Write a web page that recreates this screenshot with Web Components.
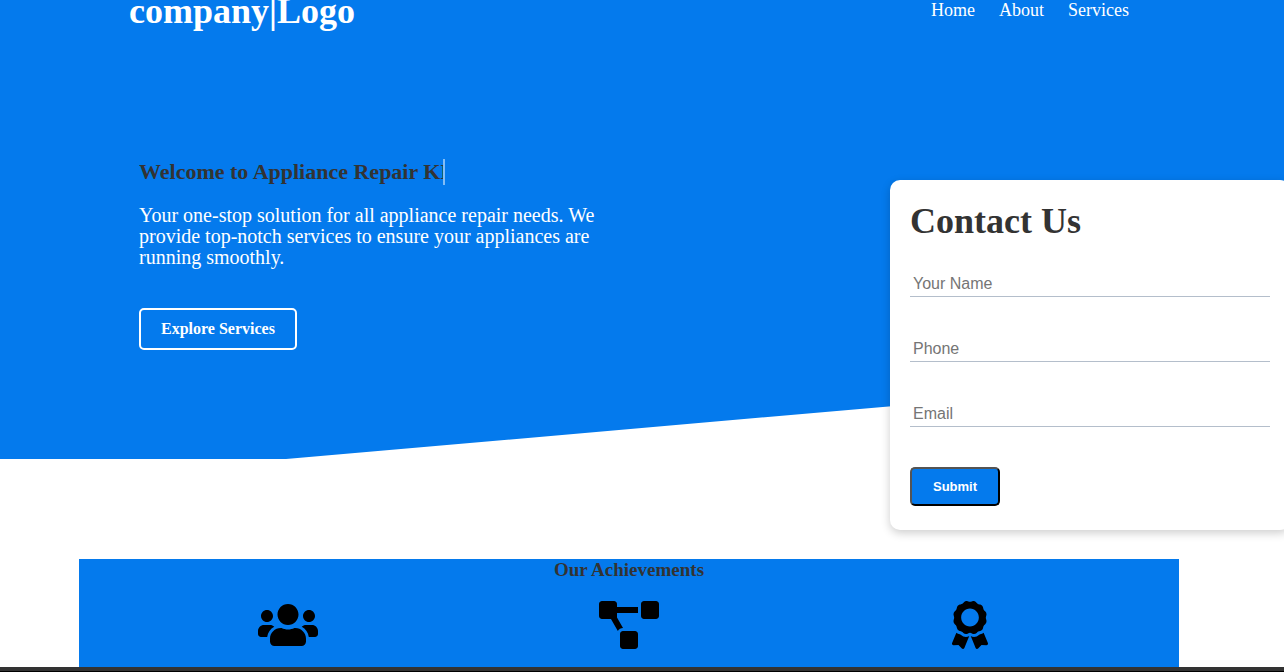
<!DOCTYPE html>
<html lang="en">
<head>
<meta charset="utf-8">
<meta name="viewport" content="width=device-width, initial-scale=1">
<title>Appliance Repair</title>
<style>
  :root { --primary: #047aed; --dark: #333; --serif: "Liberation Serif", "Times New Roman", serif; --sans: "Liberation Sans", Arial, sans-serif; }
  body { margin: 0; background: #fff; color: var(--dark); font-family: var(--serif); }
</style>
</head>
<body>
<repair-page></repair-page>
<script>
const define = (name, html) => {
  const template = document.createElement('template');
  template.innerHTML = html;
  customElements.define(name, class extends HTMLElement {
    constructor() {
      super();
      this.attachShadow({ mode: 'open' }).append(template.content.cloneNode(true));
    }
  });
};

/* Centred column shared by every section */
define('page-container', `
  <style>
    :host { display: block; padding-right: 26px; }
    div { max-width: 1100px; margin: 0 auto; }
  </style>
  <div><slot></slot></div>`);

define('site-nav', `
  <style>
    :host { display: block; position: relative; z-index: 2; background: var(--primary); color: #fff; }
    .bar { display: flex; align-items: center; justify-content: space-between; height: 21px; padding: 0 50px; }
    h1 { margin: 0; font-size: 36px; line-height: 42px; }
    nav { display: flex; gap: 24px; font-size: 18px; line-height: 21px; }
    a { color: #fff; text-decoration: none; }
  </style>
  <page-container><div class="bar">
    <h1>company|Logo</h1>
    <nav><a href="#home">Home</a><a href="#about">About</a><a href="#services">Services</a></nav>
  </div></page-container>`);

define('typed-title', `
  <style>
    :host { display: block; }
    h2 { width: 304px; margin: 0; overflow: hidden; white-space: nowrap; border-right: 2px solid rgba(255,255,255,.5); font-size: 22px; line-height: 26px; }
  </style>
  <h2><slot></slot></h2>`);

define('contact-form', `
  <style>
    :host { display: block; box-sizing: border-box; padding: 20px 20px 24px; background: #fff; border-radius: 10px; box-shadow: 0 3px 10px rgba(0,0,0,.2); }
    h2 { margin: 0 0 30px; font-size: 36px; line-height: 42px; }
    input { display: block; box-sizing: border-box; width: 100%; height: 25px; margin: 0 0 40px; padding: 3px; border: 0; border-bottom: 1px solid #b4becb; outline: 0; background: none; font: 16px/18px var(--sans); }
    input::placeholder { color: #757575; }
    button { display: block; padding: 10px 21px; border: 2px outset #000; border-radius: 5px; background: var(--primary); color: #fff; font: bold 13px/15px var(--sans); }
  </style>
  <h2>Contact Us</h2>
  <form>
    <input type="text" placeholder="Your Name" aria-label="Your Name">
    <input type="tel" placeholder="Phone" aria-label="Phone">
    <input type="email" placeholder="Email" aria-label="Email">
    <button type="button">Submit</button>
  </form>`);

define('hero-section', `
  <style>
    :host { display: block; position: relative; z-index: 1; }
    /* Blue backdrop whose lower edge rises to the right at five degrees */
    .backdrop { position: absolute; inset: 0; background: var(--primary);
      clip-path: polygon(0 0, 100% 0, 100% calc(100% - 87px), 286px 100%, 0 100%); }
    .grid { position: relative; display: grid; grid-template-columns: minmax(0, 1fr) 400px; gap: 30px; margin-right: -111px; padding: 138px 0 0 60px; }
    .text { max-width: 475px; }
    p { margin: 20px 0 40px; color: #fff; font-size: 20px; line-height: 21px; }
    a { display: inline-block; padding: 10px 20px; border: 2px solid #fff; border-radius: 5px; color: #fff; font-size: 16px; line-height: 18px; font-weight: bold; text-decoration: none; }
    contact-form { margin: 21px 0 -71px; }
  </style>
  <div class="backdrop"></div>
  <page-container><div class="grid">
    <div class="text">
      <typed-title>Welcome to Appliance Repair KL</typed-title>
      <p>Your one-stop solution for all appliance repair needs. We provide top-notch services to ensure your appliances are running smoothly.</p>
      <a href="#services">Explore Services</a>
    </div>
    <contact-form></contact-form>
  </div></page-container>`);

define('achievement-list', `
  <style>
    :host { display: block; padding-top: 100px; }
    section { background: var(--primary); padding: 0 50px 18px; }
    h3 { margin: 0 0 20px; text-align: center; font-size: 19px; line-height: 22px; }
    .row { display: grid; grid-template-columns: repeat(3, 1fr); gap: 24px; justify-items: center; }
    svg { display: block; height: 48px; fill: #000; }
  </style>
  <page-container><section>
    <h3>Our Achievements</h3>
    <div class="row">
      <svg viewBox="0 0 640 512" width="60" aria-hidden="true"><path d="M96 224c35.3 0 64-28.7 64-64s-28.7-64-64-64-64 28.7-64 64 28.7 64 64 64zm448 0c35.3 0 64-28.7 64-64s-28.7-64-64-64-64 28.7-64 64 28.7 64 64 64zm32 32h-64c-17.6 0-33.5 7.1-45.1 18.6 40.3 22.1 68.9 62 75.1 109.4h66c17.7 0 32-14.3 32-32v-32c0-35.3-28.7-64-64-64zm-256 0c61.9 0 112-50.1 112-112S381.9 32 320 32 208 82.1 208 144s50.1 112 112 112zm76.8 32h-8.3c-20.8 10-43.9 16-68.5 16s-47.6-6-68.5-16h-8.3C179.6 288 128 339.6 128 403.2V432c0 26.5 21.5 48 48 48h288c26.5 0 48-21.5 48-48v-28.8c0-63.6-51.6-115.2-115.2-115.2zm-223.7-13.4C161.5 263.1 145.6 256 128 256H64c-35.3 0-64 28.7-64 64v32c0 17.7 14.3 32 32 32h65.9c6.3-47.4 34.9-87.3 75.2-109.4z"/></svg>
      <svg viewBox="0 0 640 512" width="60" aria-hidden="true"><path d="M384 320H256c-17.67 0-32 14.33-32 32v128c0 17.67 14.33 32 32 32h128c17.67 0 32-14.33 32-32V352c0-17.67-14.33-32-32-32zM192 32c0-17.67-14.33-32-32-32H32C14.33 0 0 14.33 0 32v128c0 17.67 14.33 32 32 32h95.72l73.16 128.04C211.98 300.98 232.4 288 256 288h.28L192 175.51V128h224V64H192V32zM608 0H480c-17.67 0-32 14.33-32 32v128c0 17.67 14.33 32 32 32h128c17.67 0 32-14.33 32-32V32c0-17.67-14.33-32-32-32z"/></svg>
      <svg viewBox="0 0 384 512" width="36" aria-hidden="true"><path d="M97.12 362.63c-8.69-8.69-4.16-6.24-25.12-11.85-9.51-2.55-17.87-7.45-25.43-13.32L1.2 448.7c-4.39 10.77 3.81 22.47 15.43 22.03l52.69-2.01L105.56 507c8 8.44 22.04 5.81 26.43-4.96l52.05-127.62c-10.84 6.04-22.87 9.58-35.31 9.58-19.5 0-37.82-7.59-51.61-21.37zM382.8 448.7l-45.37-111.24c-7.56 5.88-15.92 10.77-25.43 13.32-21.07 5.64-16.45 3.18-25.12 11.85-13.79 13.78-32.12 21.37-51.62 21.37-12.44 0-24.47-3.55-35.31-9.58L252 502.04c4.39 10.77 18.44 13.4 26.43 4.96l36.25-38.28 52.69 2.01c11.62.44 19.82-11.27 15.43-22.03zM263 340c15.28-15.55 17.03-14.21 38.79-20.14 13.89-3.79 24.75-14.84 28.47-28.98 7.48-28.4 5.54-24.97 25.95-45.75 10.17-10.35 14.14-25.44 10.42-39.58-7.47-28.38-7.48-24.42 0-52.83 3.72-14.14-.25-29.23-10.42-39.58-20.41-20.78-18.47-17.36-25.95-45.75-3.72-14.14-14.58-25.19-28.47-28.98-27.88-7.61-24.52-5.62-44.95-26.41-10.17-10.35-25-14.4-38.89-10.61-27.87 7.6-23.98 7.61-51.9 0-13.89-3.79-28.72.25-38.89 10.61-20.41 20.78-17.05 18.8-44.94 26.41-13.89 3.79-24.75 14.84-28.47 28.98-7.47 28.39-5.54 24.97-25.95 45.75-10.17 10.35-14.15 25.44-10.42 39.58 7.47 28.36 7.48 24.4 0 52.82-3.72 14.14.25 29.23 10.42 39.59 20.41 20.78 18.47 17.35 25.95 45.75 3.72 14.14 14.58 25.19 28.47 28.98C104.6 325.96 106.27 325 121 340c13.23 13.47 33.84 15.88 49.74 5.82a39.676 39.676 0 0 1 42.53 0c15.89 10.06 36.5 7.65 49.73-5.82zM97.66 175.96c0-53.03 42.24-96.02 94.34-96.02s94.34 42.99 94.34 96.02-42.24 96.02-94.34 96.02-94.34-42.99-94.34-96.02z"/></svg>
    </div>
  </section></page-container>`);

define('bottom-bar', `
  <style>:host { display: block; height: 4px; background: #333; border-bottom: 1px solid #000; }</style>`);

define('repair-page', `
  <style>:host { display: block; overflow: hidden; }</style>
  <site-nav></site-nav>
  <hero-section></hero-section>
  <achievement-list></achievement-list>
  <bottom-bar></bottom-bar>`);
</script>
</body>
</html>
